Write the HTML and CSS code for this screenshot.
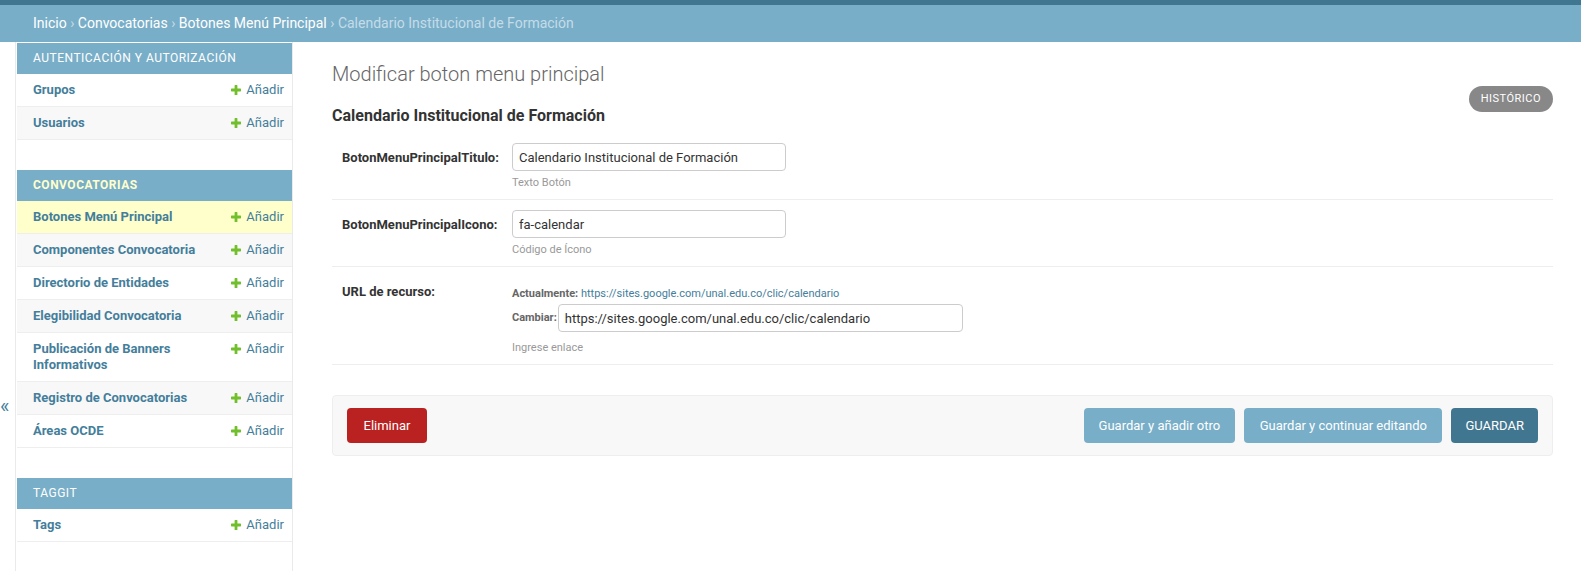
FILE: index.html
```html
<!DOCTYPE html>
<html lang="es">
<head>
<meta charset="utf-8">
<title>Modificar boton menu principal</title>
<link rel="stylesheet" href="styles.css">
</head>
<body>
<div class="topbar"></div>
<nav class="breadcrumbs"><a href="#">Inicio</a> › <a href="#">Convocatorias</a> › <a href="#">Botones Menú Principal</a> › Calendario Institucional de Formación</nav>
<div class="main">
  <button class="toggle" type="button"><span>«</span></button>
  <aside class="sidebar">
    <div class="module">
      <div class="caption">Autenticación y autorización</div>
      <div class="rows">
        <div class="row"><a class="model" href="#">Grupos</a><a class="add" href="#"><svg class="plus" viewBox="0 0 10 10"><path d="M3.6 0.6Q3.6 0 4.2 0H5.8Q6.4 0 6.4 0.6V3.6H9.4Q10 3.6 10 4.2V5.8Q10 6.4 9.4 6.4H6.4V9.4Q6.4 10 5.8 10H4.2Q3.6 10 3.6 9.4V6.4H0.6Q0 6.4 0 5.8V4.2Q0 3.6 0.6 3.6H3.6Z"/></svg>Añadir</a></div>
        <div class="row"><a class="model" href="#">Usuarios</a><a class="add" href="#"><svg class="plus" viewBox="0 0 10 10"><path d="M3.6 0.6Q3.6 0 4.2 0H5.8Q6.4 0 6.4 0.6V3.6H9.4Q10 3.6 10 4.2V5.8Q10 6.4 9.4 6.4H6.4V9.4Q6.4 10 5.8 10H4.2Q3.6 10 3.6 9.4V6.4H0.6Q0 6.4 0 5.8V4.2Q0 3.6 0.6 3.6H3.6Z"/></svg>Añadir</a></div>
      </div>
    </div>
    <div class="module current-app">
      <div class="caption">Convocatorias</div>
      <div class="rows">
        <div class="row current"><a class="model" href="#">Botones Menú Principal</a><a class="add" href="#"><svg class="plus" viewBox="0 0 10 10"><path d="M3.6 0.6Q3.6 0 4.2 0H5.8Q6.4 0 6.4 0.6V3.6H9.4Q10 3.6 10 4.2V5.8Q10 6.4 9.4 6.4H6.4V9.4Q6.4 10 5.8 10H4.2Q3.6 10 3.6 9.4V6.4H0.6Q0 6.4 0 5.8V4.2Q0 3.6 0.6 3.6H3.6Z"/></svg>Añadir</a></div>
        <div class="row"><a class="model" href="#">Componentes Convocatoria</a><a class="add" href="#"><svg class="plus" viewBox="0 0 10 10"><path d="M3.6 0.6Q3.6 0 4.2 0H5.8Q6.4 0 6.4 0.6V3.6H9.4Q10 3.6 10 4.2V5.8Q10 6.4 9.4 6.4H6.4V9.4Q6.4 10 5.8 10H4.2Q3.6 10 3.6 9.4V6.4H0.6Q0 6.4 0 5.8V4.2Q0 3.6 0.6 3.6H3.6Z"/></svg>Añadir</a></div>
        <div class="row"><a class="model" href="#">Directorio de Entidades</a><a class="add" href="#"><svg class="plus" viewBox="0 0 10 10"><path d="M3.6 0.6Q3.6 0 4.2 0H5.8Q6.4 0 6.4 0.6V3.6H9.4Q10 3.6 10 4.2V5.8Q10 6.4 9.4 6.4H6.4V9.4Q6.4 10 5.8 10H4.2Q3.6 10 3.6 9.4V6.4H0.6Q0 6.4 0 5.8V4.2Q0 3.6 0.6 3.6H3.6Z"/></svg>Añadir</a></div>
        <div class="row"><a class="model" href="#">Elegibilidad Convocatoria</a><a class="add" href="#"><svg class="plus" viewBox="0 0 10 10"><path d="M3.6 0.6Q3.6 0 4.2 0H5.8Q6.4 0 6.4 0.6V3.6H9.4Q10 3.6 10 4.2V5.8Q10 6.4 9.4 6.4H6.4V9.4Q6.4 10 5.8 10H4.2Q3.6 10 3.6 9.4V6.4H0.6Q0 6.4 0 5.8V4.2Q0 3.6 0.6 3.6H3.6Z"/></svg>Añadir</a></div>
        <div class="row"><a class="model" href="#">Publicación de Banners Informativos</a><a class="add" href="#"><svg class="plus" viewBox="0 0 10 10"><path d="M3.6 0.6Q3.6 0 4.2 0H5.8Q6.4 0 6.4 0.6V3.6H9.4Q10 3.6 10 4.2V5.8Q10 6.4 9.4 6.4H6.4V9.4Q6.4 10 5.8 10H4.2Q3.6 10 3.6 9.4V6.4H0.6Q0 6.4 0 5.8V4.2Q0 3.6 0.6 3.6H3.6Z"/></svg>Añadir</a></div>
        <div class="row"><a class="model" href="#">Registro de Convocatorias</a><a class="add" href="#"><svg class="plus" viewBox="0 0 10 10"><path d="M3.6 0.6Q3.6 0 4.2 0H5.8Q6.4 0 6.4 0.6V3.6H9.4Q10 3.6 10 4.2V5.8Q10 6.4 9.4 6.4H6.4V9.4Q6.4 10 5.8 10H4.2Q3.6 10 3.6 9.4V6.4H0.6Q0 6.4 0 5.8V4.2Q0 3.6 0.6 3.6H3.6Z"/></svg>Añadir</a></div>
        <div class="row"><a class="model" href="#">Áreas OCDE</a><a class="add" href="#"><svg class="plus" viewBox="0 0 10 10"><path d="M3.6 0.6Q3.6 0 4.2 0H5.8Q6.4 0 6.4 0.6V3.6H9.4Q10 3.6 10 4.2V5.8Q10 6.4 9.4 6.4H6.4V9.4Q6.4 10 5.8 10H4.2Q3.6 10 3.6 9.4V6.4H0.6Q0 6.4 0 5.8V4.2Q0 3.6 0.6 3.6H3.6Z"/></svg>Añadir</a></div>
      </div>
    </div>
    <div class="module">
      <div class="caption">Taggit</div>
      <div class="rows">
        <div class="row"><a class="model" href="#">Tags</a><a class="add" href="#"><svg class="plus" viewBox="0 0 10 10"><path d="M3.6 0.6Q3.6 0 4.2 0H5.8Q6.4 0 6.4 0.6V3.6H9.4Q10 3.6 10 4.2V5.8Q10 6.4 9.4 6.4H6.4V9.4Q6.4 10 5.8 10H4.2Q3.6 10 3.6 9.4V6.4H0.6Q0 6.4 0 5.8V4.2Q0 3.6 0.6 3.6H3.6Z"/></svg>Añadir</a></div>
      </div>
    </div>
  </aside>
  <main class="content">
    <div class="content-head">
      <div class="titles">
        <h1>Modificar boton menu principal</h1>
        <h2>Calendario Institucional de Formación</h2>
      </div>
      <a class="history" href="#">Histórico</a>
    </div>
    <form class="change-form">
      <fieldset class="fields">
        <div class="form-row">
          <label class="required">BotonMenuPrincipalTitulo:</label>
          <div class="field">
            <input type="text" class="vtext" value="Calendario Institucional de Formación">
            <div class="help">Texto Botón</div>
          </div>
        </div>
        <div class="form-row">
          <label class="required">BotonMenuPrincipalIcono:</label>
          <div class="field">
            <input type="text" class="vtext" value="fa-calendar">
            <div class="help">Código de Ícono</div>
          </div>
        </div>
        <div class="form-row">
          <label class="required">URL de recurso:</label>
          <div class="field">
            <p class="file-upload">Actualmente: <a href="#">https://sites.google.com/unal.edu.co/clic/calendario</a></p>
            <div class="file-change"><span class="file-upload">Cambiar:</span><input type="text" class="vurl" value="https://sites.google.com/unal.edu.co/clic/calendario"></div>
            <div class="help help-url">Ingrese enlace</div>
          </div>
        </div>
      </fieldset>
      <div class="submit-row">
        <a class="deletelink" href="#">Eliminar</a>
        <div class="actions">
          <input type="button" class="btn" value="Guardar y añadir otro">
          <input type="button" class="btn wide" value="Guardar y continuar editando">
          <input type="button" class="btn default" value="GUARDAR">
        </div>
      </div>
    </form>
  </main>
</div>
</body>
</html>
```

FILE: styles.css
```css
html, body {
  height: 100%;
}
body {
  margin: 0;
  font-family: Roboto, "Liberation Sans", sans-serif;
  font-size: 14px;
  color: #333;
  background: #fff;
  display: flex;
  flex-direction: column;
  overflow: hidden;
}
a {
  text-decoration: none;
  color: #447e9b;
}
.topbar {
  height: 5px;
  background: #417690;
  flex: 0 0 auto;
}
.breadcrumbs {
  background: #79aec8;
  padding: 10px 33px;
  line-height: 17px;
  font-size: 14px;
  color: #c4dce8;
  flex: 0 0 auto;
}
.breadcrumbs a {
  color: #fff;
}
.main {
  display: flex;
  flex: 1 1 auto;
  min-height: 0;
}
.toggle {
  box-sizing: border-box;
  flex: 0 0 16px;
  width: 16px;
  border: 0;
  border-right: 1px solid #eaeaea;
  background: #fff;
  padding: 354px 0 0 0;
  margin: 0;
  display: flex;
  align-items: flex-start;
  justify-content: flex-start;
  font-family: Roboto, "Liberation Sans", sans-serif;
  font-size: 20px;
  line-height: 20px;
  color: #447e9b;
}
.sidebar {
  flex: 0 0 275px;
  width: 275px;
  margin-left: 1px;
  padding-top: 1px;
  border-right: 1px solid #eaeaea;
}
.module {
  margin-bottom: 30px;
}
.caption {
  background: #79aec8;
  color: #fff;
  font-size: 12px;
  line-height: 15px;
  letter-spacing: 0.5px;
  text-transform: uppercase;
  padding: 8px 8px 8px 16px;
}
.current-app .caption {
  color: #ffc;
  font-weight: bold;
}
.row {
  display: flex;
  justify-content: space-between;
  border-bottom: 1px solid #eee;
  font-size: 13px;
  line-height: 16px;
}
.row:nth-child(even) {
  background: #f8f8f8;
}
.row.current {
  background: #ffc;
}
.model {
  flex: 1 1 auto;
  padding: 8px 8px 8px 16px;
  font-weight: bold;
}
.add {
  flex: 0 0 auto;
  padding: 8px;
  white-space: nowrap;
  display: flex;
  align-items: flex-start;
}
.plus {
  width: 10px;
  height: 10px;
  margin: 3px 5px 0 0;
  fill: #70bf2b;
}
.content {
  flex: 1 1 auto;
  padding: 20px 28px 20px 39px;
  min-width: 0;
}
.content-head {
  display: flex;
  justify-content: space-between;
  align-items: flex-start;
}
h1 {
  margin: 0 0 20px;
  font-size: 20px;
  line-height: 24px;
  font-weight: 300;
  color: #666;
}
h2 {
  margin: 0 0 8px;
  font-size: 16px;
  line-height: 19px;
  font-weight: bold;
  color: #333;
}
.history {
  margin-top: 24px;
  background: #888;
  color: #fff;
  font-size: 11px;
  line-height: 20px;
  letter-spacing: 0.5px;
  text-transform: uppercase;
  padding: 3px 12px;
  border-radius: 15px;
}
.change-form {
  margin: 0;
}
.fields {
  border: 0;
  margin: 0 0 30px;
  padding: 0;
  min-width: 0;
}
.form-row {
  display: flex;
  padding: 10px;
  border-bottom: 1px solid #eee;
  font-size: 13px;
}
.form-row label {
  flex: 0 0 160px;
  width: 160px;
  padding: 8px 10px 0 0;
  line-height: 13px;
  font-weight: bold;
  color: #333;
}
.field {
  display: flex;
  flex-direction: column;
  align-items: flex-start;
}
input[type=text] {
  box-sizing: border-box;
  height: 28px;
  border: 1px solid #ccc;
  border-radius: 4px;
  padding: 5px 6px;
  font-family: Roboto, "Liberation Sans", sans-serif;
  font-size: 13px;
  line-height: 16px;
  color: #333;
  margin: 0;
  background: #fff;
}
.vtext {
  width: 274px;
}
.vurl {
  width: 405px;
}
.help {
  margin-top: 5px;
  font-size: 11px;
  line-height: 13px;
  color: #999;
}
.help-url {
  margin-top: 9px;
}
.file-upload {
  font-size: 11px;
  font-weight: bold;
  color: #666;
}
p.file-upload {
  margin: 7px 0 0;
  line-height: 20px;
}
p.file-upload a {
  font-weight: normal;
}
.file-change {
  display: flex;
  align-items: center;
  gap: 1px;
  line-height: 20px;
}
.submit-row {
  display: flex;
  justify-content: space-between;
  align-items: center;
  padding: 12px 14px;
  background: #f8f8f8;
  border: 1px solid #eee;
  border-radius: 4px;
}
.deletelink {
  display: block;
  background: #ba2121;
  color: #fff;
  border-radius: 4px;
  padding: 10px 16.5px;
  font-size: 13px;
  line-height: 15px;
}
.actions {
  display: flex;
  gap: 9px;
}
.btn {
  height: 35px;
  padding: 10px 15px;
  border: 0;
  border-radius: 4px;
  background: #79aec8;
  color: #fff;
  font-family: Roboto, "Liberation Sans", sans-serif;
  font-size: 13px;
  line-height: 15px;
  margin: 0;
}
.btn.wide {
  padding: 10px 15.5px;
}
.btn.default {
  background: #417690;
  padding: 10px 14px;
}
```
